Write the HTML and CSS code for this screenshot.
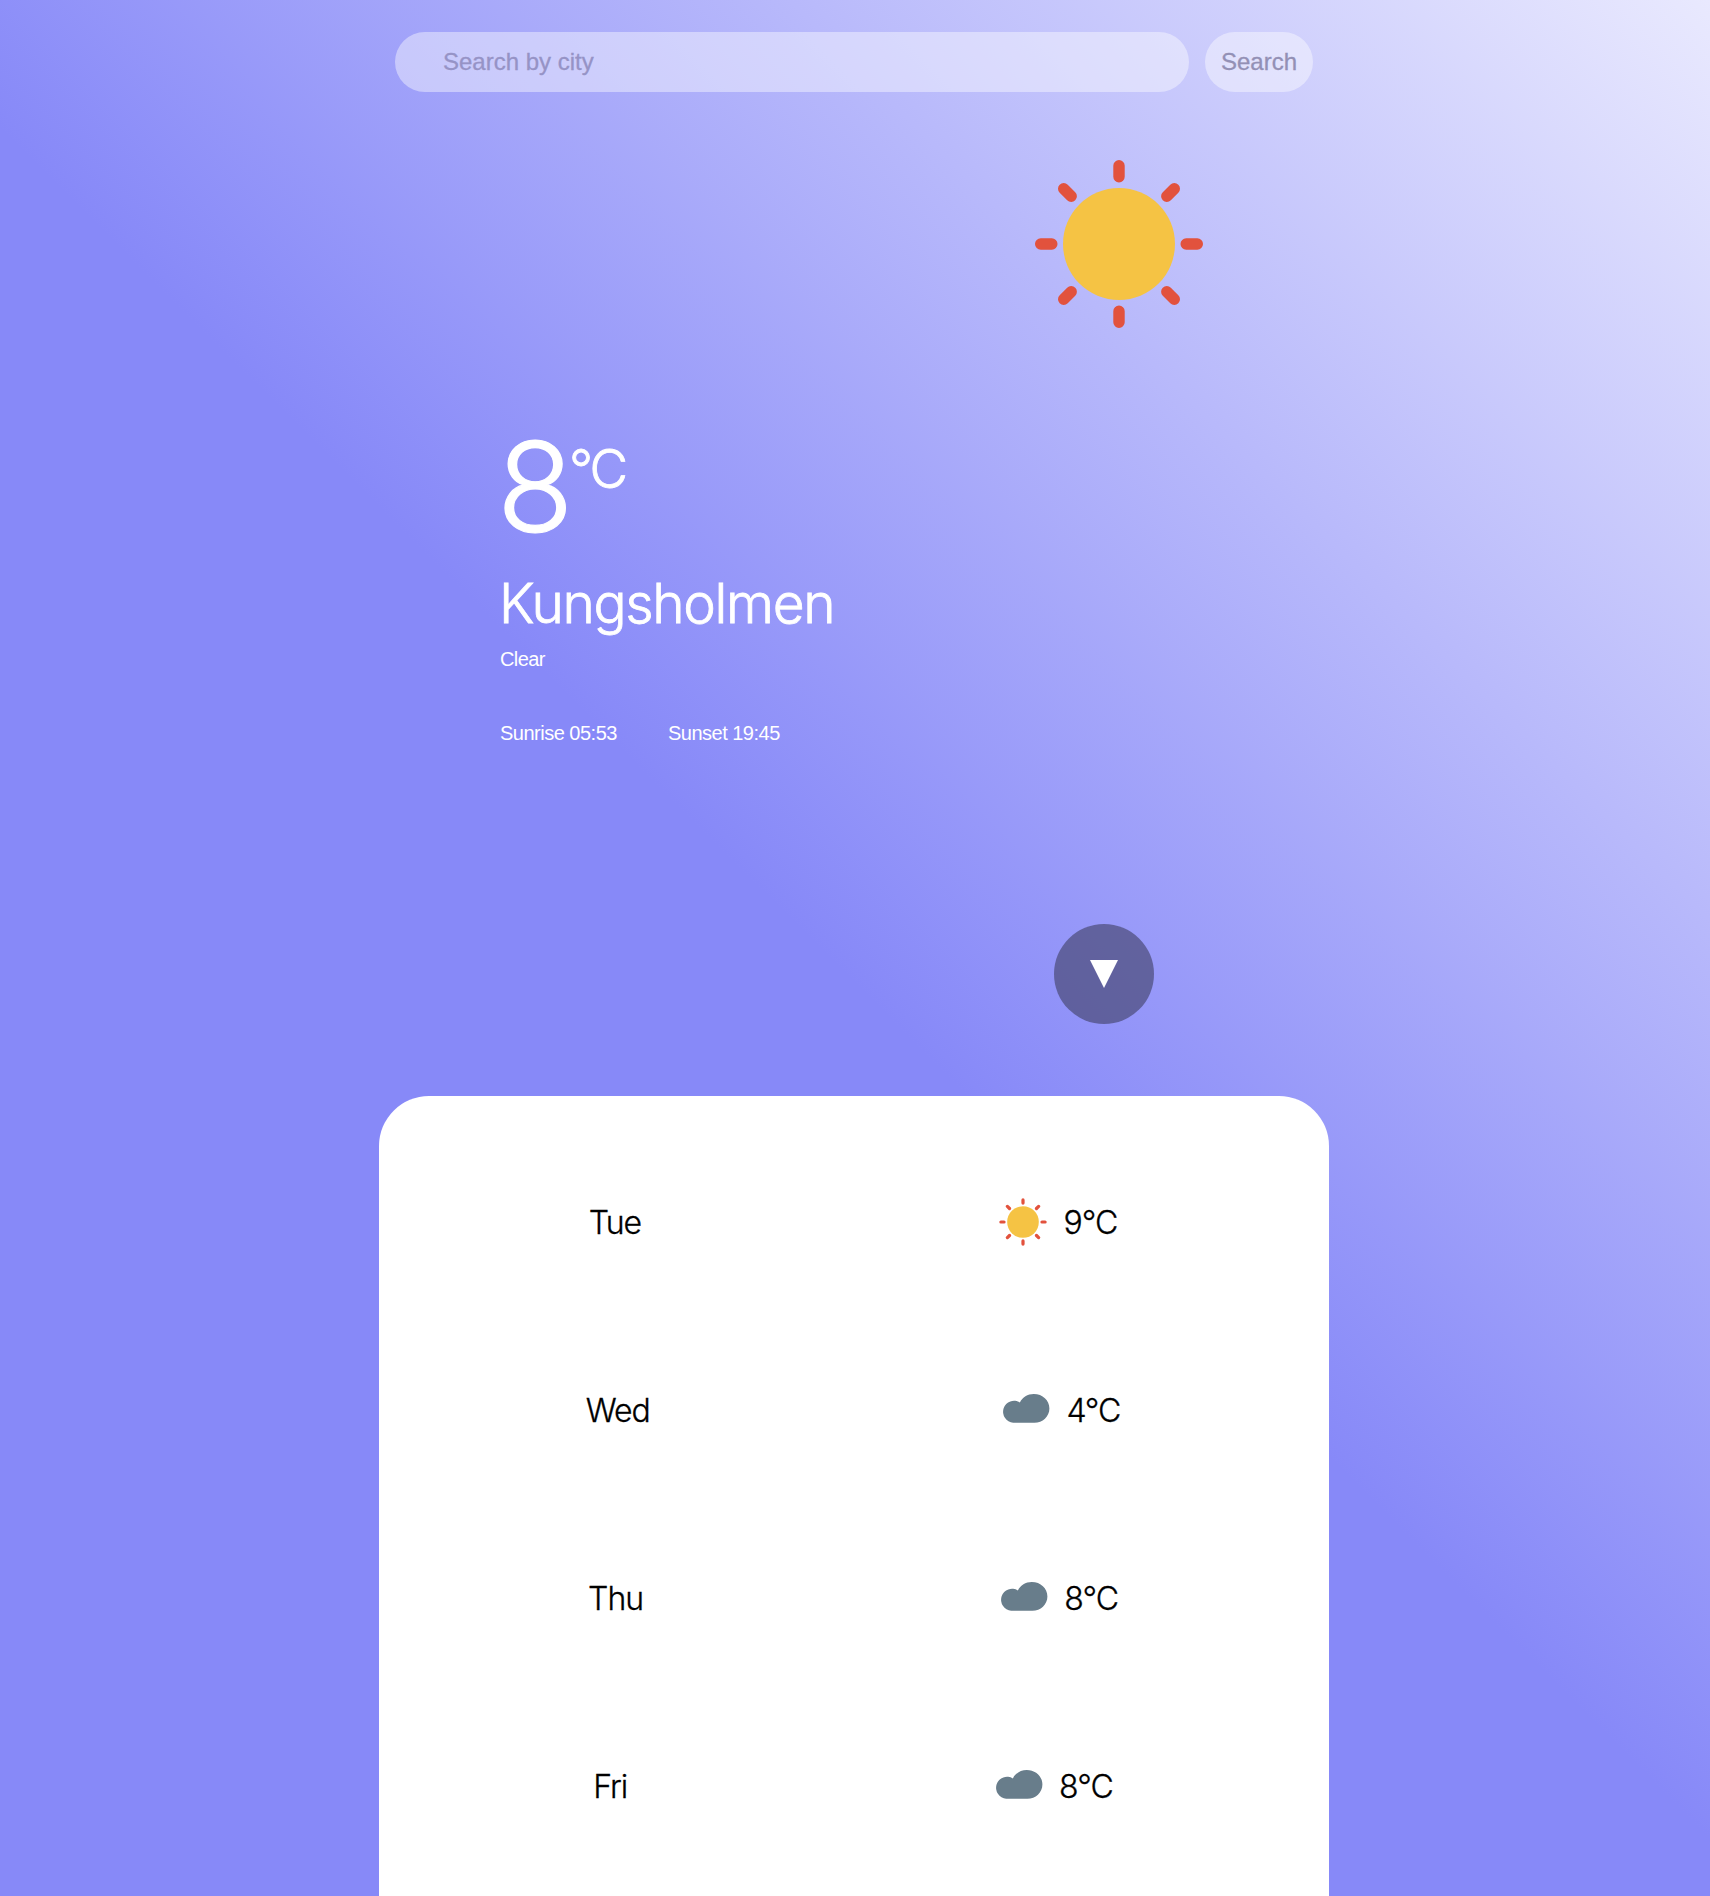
FILE: index.html
```html
<!DOCTYPE html>
<html lang="en">
<head>
<meta charset="utf-8">
<title>Weather</title>
<link rel="stylesheet" href="styles.css">
</head>
<body>
<svg width="0" height="0" class="defs" aria-hidden="true">
  <symbol id="sun" viewBox="-85 -85 170 170">
    <circle r="56" fill="#f5c344"/>
    <g stroke="#e2523d" stroke-width="11.4" stroke-linecap="round">
      <path d="M0-78.3V-67.2M0 78.3V67.2M-78.3 0H-67.2M78.3 0H67.2"/>
      <path d="M-55.3-55.3L-47.8-47.8M55.3-55.3L47.8-47.8M-55.3 55.3L-47.8 47.8M55.3 55.3L47.8 47.8"/>
    </g>
  </symbol>
  <symbol id="cloud" viewBox="0 0 48 32">
    <path fill="#687d8b" d="M11.2 28.7A11 11 0 1 1 17.9 8.4C20.4 3.2 25.6 0 31.8 0C40.6 0 47.4 6.4 47.4 14.4S40.6 28.7 32.4 28.7z"/>
  </symbol>
</svg>
<main class="app">
  <form class="search">
    <input class="search-input" type="text" placeholder="Search by city">
    <button class="search-button" type="button">Search</button>
  </form>
  <section class="current">
    <svg class="current-icon"><use href="#sun"/></svg>
    <div class="temperature"><span class="degrees">8</span><span class="unit">°C</span></div>
    <h1 class="city">Kungsholmen</h1>
    <p class="condition">Clear</p>
    <div class="sun-times"><span>Sunrise 05:53</span><span>Sunset 19:45</span></div>
    <button class="next" type="button" aria-label="Next city"><svg width="28" height="28"><path d="M0 0H28L14 28z" fill="#fff"/></svg></button>
  </section>
  <section class="forecast">
    <div class="row"><span class="day">Tue</span><div class="reading"><svg class="icon-sun"><use href="#sun"/></svg><span>9°C</span></div></div>
    <div class="row"><span class="day">Wed</span><div class="reading"><svg class="icon-cloud"><use href="#cloud"/></svg><span>4°C</span></div></div>
    <div class="row"><span class="day">Thu</span><div class="reading"><svg class="icon-cloud"><use href="#cloud"/></svg><span>8°C</span></div></div>
    <div class="row"><span class="day">Fri</span><div class="reading"><svg class="icon-cloud"><use href="#cloud"/></svg><span>8°C</span></div></div>
  </section>
</main>
</body>
</html>
```
FILE: styles.css
```css
* { box-sizing: border-box; }
body {
  margin: 0;
  height: 1896px;
  font-family: Inter, "Liberation Sans", sans-serif;
  font-weight: 300;
  background: linear-gradient(45deg, #8789f8 49%, #e9e9fe 100%);
}
svg { display: block; }
.defs { position: absolute; }
.app { width: 950px; margin-left: 379px; }
.search { display: flex; gap: 16px; padding: 32px 16px; }
.search-input, .search-button {
  height: 60px;
  border: 0;
  border-radius: 30px;
  background: rgba(255, 255, 255, .42);
  font: 400 24px "Liberation Sans", sans-serif;
  color: #9390b5;
  -webkit-text-stroke: .3px;
}
.search-input { flex: 1; padding: 0 48px; }
.search-input::placeholder { color: #9693c6; }
.search-button { width: 108px; padding: 0; }
.current { display: flex; flex-direction: column; height: 972px; padding: 34.5px 0 0 121px; color: #fff; }
.current-icon { width: 170px; height: 170px; margin-left: 534px; }
.temperature { display: flex; height: 128px; margin-top: 94px; line-height: 128px; -webkit-text-stroke: .8px; }
.degrees { font-size: 125px; width: 73px; margin-left: -3px; -webkit-text-stroke: 1.2px; }
.unit { font-size: 53px; line-height: 64px; margin: 14px 0 0 -1px; letter-spacing: -3px; }
.city { margin: 20.5px 0 0 -1px; font-size: 55px; line-height: 64px; font-weight: 300; letter-spacing: -1.35px; -webkit-text-stroke: .8px; }
.condition { margin: 12px 0 0; font: 400 20px/24px "Liberation Sans", sans-serif; letter-spacing: -.6px; }
.sun-times { display: flex; gap: 51px; margin: 50px 0 0; font: 400 20px/24px "Liberation Sans", sans-serif; letter-spacing: -.5px; }
.next {
  display: grid;
  place-items: center;
  width: 100px;
  height: 100px;
  margin: 179px 0 0 554px;
  padding: 0;
  border: 0;
  border-radius: 50%;
  background: rgba(67, 67, 107, .64);
}
.forecast { height: 800px; padding: 32px 42px 0; background: #fff; border-radius: 50px 50px 0 0; }
.row { display: flex; align-items: center; justify-content: space-around; height: 188px; font-size: 32px; letter-spacing: -1px; -webkit-text-stroke: .3px; }
.day { margin-right: -1px; }
.reading { display: flex; align-items: center; gap: 16px; padding-left: 24px; padding-right: 2px; }
.icon-sun { width: 48px; height: 48px; margin: 0 1px 0 -1px; }
.icon-cloud { width: 48px; height: 32px; }
```
